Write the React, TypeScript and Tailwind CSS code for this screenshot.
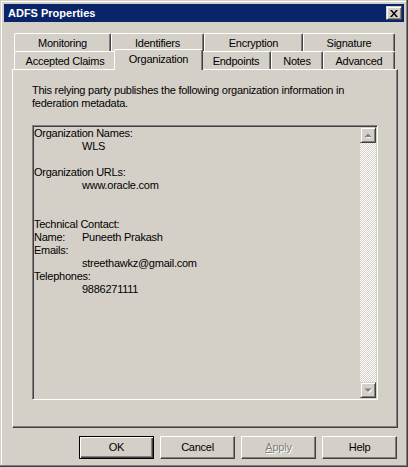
import React from 'react';

const rowOne = [
  { label: 'Monitoring', w: 'w-[97px]' },
  { label: 'Identifiers', w: 'w-[93px]' },
  { label: 'Encryption', w: 'w-[99px]' },
  { label: 'Signature', w: 'w-[92px]' },
];

const lines: { text: string; indent?: boolean; value?: string }[] = [
  { text: 'Organization Names:' },
  { text: 'WLS', indent: true },
  { text: '' },
  { text: 'Organization URLs:' },
  { text: 'www.oracle.com', indent: true },
  { text: '' },
  { text: '' },
  { text: 'Technical Contact:' },
  { text: 'Name:', value: 'Puneeth Prakash' },
  { text: 'Emails:' },
  { text: 'streethawkz@gmail.com', indent: true },
  { text: 'Telephones:' },
  { text: '9886271111', indent: true },
];

const Tab = ({ label, w }: { label: string; w: string }) => (
  <div
    className={`${w} h-[18px] flex justify-center pt-[3px] leading-[13px] border-t border-l border-r border-white border-r-[#404040] rounded-t-[2px] shadow-[inset_-1px_0_#808080]`}
  >
    {label}
  </div>
);

const ScrollArrow = ({ up }: { up?: boolean }) => (
  <div className="w-[16px] h-[16px] bg-[#d4d0c8] flex items-center justify-center border border-[#d4d0c8] border-r-[#404040] border-b-[#404040] shadow-[inset_1px_1px_#ffffff,inset_-1px_-1px_#808080]">
    <svg width="8" height="5" viewBox="0 0 8 5">
      {up ? (
        <>
          <path d="M2 5h5L4.5 2.5z" fill="#ffffff" />
          <path d="M0.5 4h7L4 0.5z" fill="#808080" />
        </>
      ) : (
        <>
          <path d="M1.5 1.5h7L5 5z" fill="#ffffff" />
          <path d="M0.5 0.5h7L4 4z" fill="#808080" />
        </>
      )}
    </svg>
  </div>
);

const Button = ({ label, isDefault }: { label: React.ReactNode; isDefault?: boolean }) => (
  <div
    className={
      isDefault
        ? 'w-[75px] h-[23px] flex items-center justify-center border border-black shadow-[inset_1px_1px_#ffffff,inset_-1px_-1px_#404040,inset_-2px_-2px_#808080]'
        : 'w-[75px] h-[23px] flex items-center justify-center border border-white border-r-[#404040] border-b-[#404040] shadow-[inset_-1px_-1px_#808080]'
    }
  >
    {label}
  </div>
);

export default function App() {
  return (
    <div className="w-[408px] h-[467px] bg-[#d4d0c8] flex flex-col p-[4px] text-[11px] tracking-[-0.25px] text-black font-['Liberation_Sans',Arial,sans-serif] shadow-[inset_-1px_-1px_#404040,inset_-2px_-2px_#808080,inset_1px_1px_#d4d0c8,inset_2px_2px_#ffffff]">
      {/* caption */}
      <div className="h-[18px] bg-[#0a246a] flex items-center justify-between pl-[4px] pr-[2px]">
        <span className="text-white font-bold text-[11px] leading-[13px] tracking-normal">ADFS Properties</span>
        <div className="w-[16px] h-[14px] bg-[#d4d0c8] flex items-center justify-center border border-[#d4d0c8] border-r-[#404040] border-b-[#404040] shadow-[inset_1px_1px_#ffffff,inset_-1px_-1px_#808080]">
          <svg width="8" height="7" viewBox="0 0 8 7">
            <path d="M0 0h2l2 2.5L6 0h2L5 3.5 8 7H6L4 4.5 2 7H0l3-3.5z" fill="#000" />
          </svg>
        </div>
      </div>

      <div className="flex flex-col pl-[8px] pr-[7px] pt-[11px]">
        {/* tabs */}
        <div className="flex ml-[2px]">
          {rowOne.map((t) => (
            <Tab key={t.label} {...t} />
          ))}
        </div>
        <div className="flex items-end h-[18px] ml-[2px]">
          <Tab label="Accepted Claims" w="w-[102px]" />
          <div className="relative z-10 w-[89px] h-[21px] -mx-[2px] -mb-[1px] bg-[#d4d0c8] flex justify-center pt-[3px] leading-[13px] border-t border-l border-r border-white border-r-[#404040] rounded-t-[2px] shadow-[inset_-1px_0_#808080]">
            Organization
          </div>
          <Tab label="Endpoints" w="w-[70px]" />
          <Tab label="Notes" w="w-[52px]" />
          <Tab label="Advanced" w="w-[72px]" />
        </div>

        {/* page */}
        <div className="w-[386px] h-[359px] flex flex-col pl-[19px] pt-[14px] border border-white border-r-[#404040] border-b-[#404040] shadow-[inset_-1px_-1px_#808080]">
          <p className="leading-[13px]">
            <span className="block">This relying party publishes the following organization information in</span>
            <span className="block">federation metadata.</span>
          </p>

          <div className="mt-[15px] w-[346px] h-[275px] flex p-[1px] border border-[#808080] border-r-white border-b-white shadow-[inset_1px_1px_#404040]">
            <div className="flex-1 flex flex-col">
              {lines.map((l, i) => (
                <div key={i} className={`h-[13px] leading-[13px] flex ${l.indent ? 'pl-[48px]' : ''}`}>
                  {l.value ? (
                    <>
                      <span className="w-[48px]">{l.text}</span>
                      <span>{l.value}</span>
                    </>
                  ) : (
                    l.text
                  )}
                </div>
              ))}
            </div>
            <div className="w-[16px] flex flex-col">
              <ScrollArrow up />
              <div className="flex-1 bg-[repeating-conic-gradient(#ffffff_0%_25%,#d4d0c8_0%_50%)] bg-[length:2px_2px]" />
              <ScrollArrow />
            </div>
          </div>
        </div>

        {/* buttons */}
        <div className="mt-[8px] flex justify-end gap-[6px]">
          <Button label="OK" isDefault />
          <Button label="Cancel" />
          <Button
            label={
              <span className="text-[#808080] [text-shadow:1px_1px_#ffffff]">
                <span className="underline">A</span>pply
              </span>
            }
          />
          <Button label="Help" />
        </div>
      </div>
    </div>
  );
}
